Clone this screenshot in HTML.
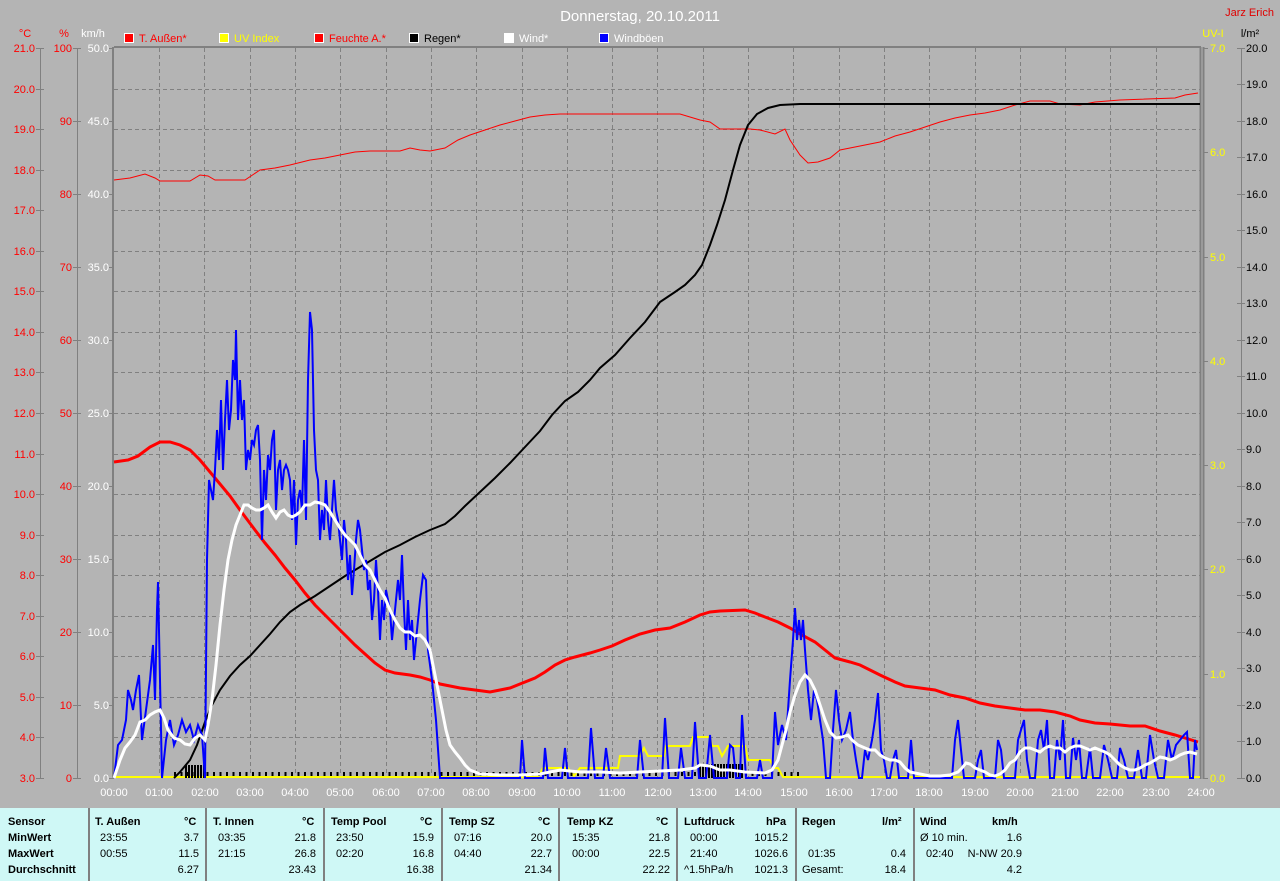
<!DOCTYPE html>
<html><head><meta charset="utf-8"><style>
body{margin:0;width:1280px;height:881px;background:#b4b4b4;font-family:"Liberation Sans",sans-serif;overflow:hidden;position:relative}
svg{position:absolute;left:0;top:0}
.tbl{position:absolute;left:0;top:808px;width:1280px;height:73px;background:#cff8f6;font-size:11px;color:#000}
.c{position:absolute;top:0;height:73px;border-left:2px solid #808080}
.r{position:absolute;white-space:nowrap}
.b{font-weight:bold}
</style></head><body>
<svg width="1280" height="808" font-family="Liberation Sans, sans-serif" font-size="11">
<text x="640" y="21" text-anchor="middle" fill="#fff" font-size="15">Donnerstag, 20.10.2011</text>
<text x="1274" y="16" text-anchor="end" fill="#e00000">Jarz Erich</text>
<!-- legend -->
<g font-size="11">
<rect x="124.5" y="33.5" width="9" height="9" fill="#f00" stroke="#fff"/><text x="139" y="42" fill="#f00">T. Außen*</text>
<rect x="219.5" y="33.5" width="9" height="9" fill="#ff0" stroke="#fff"/><text x="234" y="42" fill="#ff0">UV Index</text>
<rect x="314.5" y="33.5" width="9" height="9" fill="#f00" stroke="#fff"/><text x="329" y="42" fill="#f00">Feuchte A.*</text>
<rect x="409.5" y="33.5" width="9" height="9" fill="#000" stroke="#fff"/><text x="424" y="42" fill="#000">Regen*</text>
<rect x="504.5" y="33.5" width="9" height="9" fill="#fff" stroke="#fff"/><text x="519" y="42" fill="#fff">Wind*</text>
<rect x="599.5" y="33.5" width="9" height="9" fill="#00f" stroke="#fff"/><text x="614" y="42" fill="#fff">Windböen</text>
</g>
<!-- axis titles -->
<text x="25" y="37" fill="#f00" text-anchor="middle">°C</text>
<text x="64" y="37" fill="#f00" text-anchor="middle">%</text>
<text x="93" y="37" fill="#fff" text-anchor="middle">km/h</text>
<text x="1213" y="37" fill="#ff0" text-anchor="middle">UV-I</text>
<text x="1250" y="37" fill="#000" text-anchor="middle">l/m²</text>
<g id="grid" stroke="#808080" stroke-dasharray="4,3" stroke-width="1">
<path d="M114 89.5H1200M114 129.5H1200M114 170.5H1200M114 210.5H1200M114 251.5H1200M114 291.5H1200M114 332.5H1200M114 372.5H1200M114 413.5H1200M114 454.5H1200M114 494.5H1200M114 535.5H1200M114 575.5H1200M114 616.5H1200M114 656.5H1200M114 697.5H1200M114 737.5H1200"/>
<path d="M159.5 48V778M204.5 48V778M250.5 48V778M295.5 48V778M340.5 48V778M386.5 48V778M431.5 48V778M476.5 48V778M522.5 48V778M567.5 48V778M612.5 48V778M657.5 48V778M703.5 48V778M748.5 48V778M793.5 48V778M839.5 48V778M884.5 48V778M929.5 48V778M975.5 48V778M1020.5 48V778M1065.5 48V778M1110.5 48V778M1156.5 48V778"/>
</g>
<!-- axes -->
<g stroke="#808080" fill="none">
<path d="M40.5 48V778M77.5 48V778M1241.5 48V778" />
<path d="M113 47V779M114 47H1201M1200.5 47V779M1203.5 47V779" stroke-width="2"/>
<path d="M36 48.5h8M36 89.5h8M36 129.5h8M36 170.5h8M36 210.5h8M36 251.5h8M36 291.5h8M36 332.5h8M36 372.5h8M36 413.5h8M36 454.5h8M36 494.5h8M36 535.5h8M36 575.5h8M36 616.5h8M36 656.5h8M36 697.5h8M36 737.5h8M36 778.5h8"/>
<path d="M73 48.5h8M73 121.5h8M73 194.5h8M73 267.5h8M73 340.5h8M73 413.5h8M73 486.5h8M73 559.5h8M73 632.5h8M73 705.5h8M73 778.5h8"/>
<path d="M109 48.5h5M109 121.5h5M109 194.5h5M109 267.5h5M109 340.5h5M109 413.5h5M109 486.5h5M109 559.5h5M109 632.5h5M109 705.5h5M109 778.5h5"/>
<path d="M1203 48.5h5M1203 152.5h5M1203 257.5h5M1203 361.5h5M1203 465.5h5M1203 569.5h5M1203 674.5h5M1203 778.5h5"/>
<path d="M1237 48.5h8M1237 84.5h8M1237 121.5h8M1237 157.5h8M1237 194.5h8M1237 230.5h8M1237 267.5h8M1237 303.5h8M1237 340.5h8M1237 376.5h8M1237 413.5h8M1237 449.5h8M1237 486.5h8M1237 522.5h8M1237 559.5h8M1237 595.5h8M1237 632.5h8M1237 668.5h8M1237 705.5h8M1237 741.5h8M1237 778.5h8"/>
</g>
<g fill="#f00" text-anchor="end">
<text x="35" y="52">21.0</text><text x="35" y="93">20.0</text><text x="35" y="133">19.0</text><text x="35" y="174">18.0</text><text x="35" y="214">17.0</text><text x="35" y="255">16.0</text><text x="35" y="295">15.0</text><text x="35" y="336">14.0</text><text x="35" y="376">13.0</text><text x="35" y="417">12.0</text><text x="35" y="458">11.0</text><text x="35" y="498">10.0</text><text x="35" y="539">9.0</text><text x="35" y="579">8.0</text><text x="35" y="620">7.0</text><text x="35" y="660">6.0</text><text x="35" y="701">5.0</text><text x="35" y="741">4.0</text><text x="35" y="782">3.0</text>
<text x="72" y="52">100</text><text x="72" y="125">90</text><text x="72" y="198">80</text><text x="72" y="271">70</text><text x="72" y="344">60</text><text x="72" y="417">50</text><text x="72" y="490">40</text><text x="72" y="563">30</text><text x="72" y="636">20</text><text x="72" y="709">10</text><text x="72" y="782">0</text>
</g>
<g fill="#fff" text-anchor="end">
<text x="109" y="52">50.0</text><text x="109" y="125">45.0</text><text x="109" y="198">40.0</text><text x="109" y="271">35.0</text><text x="109" y="344">30.0</text><text x="109" y="417">25.0</text><text x="109" y="490">20.0</text><text x="109" y="563">15.0</text><text x="109" y="636">10.0</text><text x="109" y="709">5.0</text><text x="109" y="782">0.0</text>
</g>
<g fill="#ff0">
<text x="1210" y="52">7.0</text><text x="1210" y="156">6.0</text><text x="1210" y="261">5.0</text><text x="1210" y="365">4.0</text><text x="1210" y="469">3.0</text><text x="1210" y="573">2.0</text><text x="1210" y="678">1.0</text><text x="1210" y="782">0.0</text>
</g>
<g fill="#000">
<text x="1246" y="52">20.0</text><text x="1246" y="88">19.0</text><text x="1246" y="125">18.0</text><text x="1246" y="161">17.0</text><text x="1246" y="198">16.0</text><text x="1246" y="234">15.0</text><text x="1246" y="271">14.0</text><text x="1246" y="307">13.0</text><text x="1246" y="344">12.0</text><text x="1246" y="380">11.0</text><text x="1246" y="417">10.0</text><text x="1246" y="453">9.0</text><text x="1246" y="490">8.0</text><text x="1246" y="526">7.0</text><text x="1246" y="563">6.0</text><text x="1246" y="599">5.0</text><text x="1246" y="636">4.0</text><text x="1246" y="672">3.0</text><text x="1246" y="709">2.0</text><text x="1246" y="745">1.0</text><text x="1246" y="782">0.0</text>
</g>
<g fill="#fff" text-anchor="middle">
<text x="114" y="796">00:00</text><text x="159" y="796">01:00</text><text x="205" y="796">02:00</text><text x="250" y="796">03:00</text><text x="295" y="796">04:00</text><text x="340" y="796">05:00</text><text x="386" y="796">06:00</text><text x="431" y="796">07:00</text><text x="476" y="796">08:00</text><text x="522" y="796">09:00</text><text x="567" y="796">10:00</text><text x="612" y="796">11:00</text><text x="658" y="796">12:00</text><text x="703" y="796">13:00</text><text x="748" y="796">14:00</text><text x="794" y="796">15:00</text><text x="839" y="796">16:00</text><text x="884" y="796">17:00</text><text x="929" y="796">18:00</text><text x="975" y="796">19:00</text><text x="1020" y="796">20:00</text><text x="1065" y="796">21:00</text><text x="1110" y="796">22:00</text><text x="1156" y="796">23:00</text><text x="1201" y="796">24:00</text>
</g>
<!-- UV -->
<polyline fill="none" stroke="#ff0" stroke-width="2" points="114,777 538,777 543,768 568,768 574,776 580,768 618,768 620,756 640,756 644,748 648,756 664,756 666,746 690,746 693,737 710,737 712,746 718,746 722,756 728,746 745,746 748,760 770,760 774,768 778,768 783,777 1200,777"/>
<!-- rain dots/bars -->
<path d="M174 774H700M745 774H800" stroke="#000" stroke-width="4" stroke-dasharray="2,4.5"/>
<path d="M186 765V778M189 765V778M192 765V778M195 765V778M198 765V778M201 765V778M204 765V778M700 764V778M703 764V778M706 764V778M709 764V778M712 764V778M715 764V778M718 764V778M721 764V778M724 764V778M727 764V778M730 764V778M733 764V778M736 764V778M739 764V778M742 764V778" stroke="#000" stroke-width="2"/>
<!-- humidity -->
<polyline fill="none" stroke="#f00" stroke-width="1" points="114,180 130,178 145,174 155,178 160,181 190,181 200,175 208,176 215,180 245,180 260,170 275,168 290,165 310,160 325,158 340,155 355,152 370,151 400,151 410,148 420,150 430,151 445,148 458,140 470,135 485,130 500,125 515,121 530,117 545,115 560,114 680,114 690,117 700,120 710,122 720,129 750,129 760,130 775,134 785,129 790,140 800,155 808,163 818,162 830,158 840,150 850,148 865,145 880,142 895,136 910,132 925,127 940,122 955,118 970,115 985,113 1000,110 1015,105 1030,101 1050,101 1060,104 1080,105 1095,102 1120,100 1175,98 1185,95 1198,93"/>
<!-- temp -->
<polyline fill="none" stroke="#f00" stroke-width="3" points="114,462 128,460 138,456 150,447 160,442 170,442 180,445 190,450 200,460 210,472 220,484 230,496 240,510 255,530 265,543 275,555 285,568 295,580 305,593 315,605 325,615 335,625 345,635 355,645 365,654 375,663 385,670 395,673 410,675 420,677 430,680 440,684 450,686 460,688 475,690 490,692 500,690 510,688 520,684 535,678 545,672 555,665 565,660 575,657 590,653 600,650 612,646 625,640 640,634 655,630 670,628 685,622 700,615 710,612 720,611 745,610 755,613 765,617 778,622 790,628 800,634 815,642 825,650 835,658 850,662 860,665 870,670 880,675 895,682 905,686 920,688 935,690 950,695 965,698 980,703 995,706 1010,708 1025,710 1040,710 1055,712 1070,716 1080,720 1095,723 1110,724 1130,726 1145,726 1160,731 1175,735 1185,738 1198,742"/>
<!-- rain cumulative -->
<polyline fill="none" stroke="#000" stroke-width="2" points="174,778 180,772 190,760 197,745 205,722 212,705 220,690 230,676 240,665 250,656 260,645 270,634 280,622 290,612 300,605 315,596 330,586 345,576 355,570 370,561 385,552 400,545 415,537 430,530 445,524 455,516 465,506 480,492 495,478 510,463 525,447 540,431 552,415 565,401 578,392 590,380 600,368 615,355 630,338 645,322 660,302 675,292 685,285 695,275 702,265 710,245 717,225 725,200 733,170 740,145 748,125 757,114 768,108 780,105 800,104 1200,104"/>
<!-- gusts -->
<polyline fill="none" stroke="#00f" stroke-width="2" points="114,778 118,745 122,740 126,720 128,690 131,700 133,710 136,690 139,675 142,740 146,710 150,680 153,645 155,700 157,610 158,582 160,680 162,778 166,740 170,720 174,745 178,735 182,720 186,732 190,725 194,740 198,725 202,735 205,778 207,560 209,480 211,490 213,500 215,470 217,430 219,460 221,400 223,470 225,420 227,380 229,430 231,410 233,360 235,380 236,330 238,420 240,380 242,420 244,400 246,470 248,450 250,460 252,440 254,445 256,430 258,425 260,460 262,540 264,470 266,500 268,455 270,470 272,440 274,430 276,510 278,470 280,460 282,490 284,470 286,465 288,470 290,480 292,520 294,480 296,545 298,500 300,490 302,510 304,440 306,520 308,380 310,312 312,330 314,430 316,470 318,480 320,540 322,510 324,530 326,480 328,520 330,540 332,510 334,480 336,510 338,520 340,540 342,560 344,520 346,540 348,580 350,555 352,595 354,570 356,540 358,520 360,530 362,550 364,570 366,560 368,590 370,580 372,620 374,600 376,560 378,590 380,640 382,600 384,620 386,590 388,600 390,610 392,640 394,620 396,600 398,580 400,600 402,555 404,610 406,650 408,600 410,640 412,620 414,660 416,640 418,620 420,600 423,575 426,580 428,650 432,680 436,720 440,778 520,778 522,740 525,778 543,778 545,748 548,778 562,778 565,748 568,778 588,778 591,728 595,778 603,778 606,748 610,778 637,778 640,740 644,778 662,778 665,718 669,778 678,778 681,748 685,778 692,778 695,722 699,778 706,778 710,735 714,778 727,778 730,745 733,748 736,778 740,778 742,715 746,778 757,778 760,760 763,778 772,778 775,712 778,745 782,725 786,740 790,680 793,640 795,608 797,640 799,620 801,640 803,620 805,650 808,690 811,720 814,690 817,700 820,720 823,740 826,778 830,778 833,730 836,690 839,720 842,740 846,730 850,712 853,740 856,760 859,778 862,778 865,750 868,760 872,740 875,720 878,693 881,750 884,760 887,778 890,778 893,760 896,750 899,778 908,778 911,740 914,778 952,778 955,740 958,720 961,750 964,778 975,778 978,760 981,750 984,778 995,778 998,740 1001,750 1004,778 1015,778 1018,740 1021,730 1024,720 1027,760 1030,778 1035,778 1038,740 1041,730 1044,750 1047,720 1050,778 1054,778 1057,740 1060,760 1063,720 1066,778 1070,778 1073,738 1076,760 1079,740 1082,778 1086,778 1090,748 1093,778 1100,778 1104,745 1108,760 1112,778 1117,778 1120,748 1124,760 1128,778 1134,778 1138,750 1142,778 1146,778 1150,735 1154,760 1158,778 1164,778 1168,740 1172,760 1176,745 1180,740 1184,735 1187,732 1190,778 1193,778 1195,740 1197,750"/>
<!-- wind -->
<polyline fill="none" stroke="#fff" stroke-width="3" points="114,778 120,760 125,748 130,742 135,735 140,722 145,720 150,715 155,712 160,710 164,718 168,730 174,738 180,740 185,744 190,745 195,738 200,735 205,740 208,725 212,700 216,665 220,625 224,590 228,560 232,540 236,525 240,515 244,505 248,505 252,508 256,510 260,510 264,508 268,505 272,512 276,518 280,512 284,510 288,515 292,517 296,515 300,512 305,505 310,505 315,502 320,503 325,505 330,512 335,520 340,528 345,535 350,540 355,545 360,555 365,565 370,570 375,580 380,590 385,598 390,610 395,620 400,628 405,632 410,632 415,636 420,635 425,640 430,650 434,670 438,690 442,710 446,730 450,745 455,752 460,758 465,765 470,770 475,772 480,774 500,775 520,775 540,774 560,770 580,772 600,772 620,773 640,772 660,771 680,770 695,768 700,765 710,766 720,770 730,770 745,772 765,773 772,770 778,760 782,745 786,730 790,712 795,695 800,682 805,675 810,680 815,690 820,705 825,720 830,732 836,738 842,737 848,735 852,740 858,745 865,748 870,750 875,750 880,755 885,758 890,760 895,760 900,762 905,768 910,772 920,774 930,776 940,776 950,775 958,772 962,768 966,763 970,764 975,768 980,770 985,772 990,775 995,776 1000,774 1005,770 1010,763 1015,760 1020,752 1025,748 1030,748 1035,750 1040,752 1045,748 1050,746 1055,748 1060,748 1065,752 1070,748 1075,746 1080,746 1085,748 1090,750 1095,748 1100,750 1105,752 1110,755 1115,760 1120,765 1125,768 1130,770 1135,770 1140,768 1145,765 1150,763 1155,760 1160,757 1165,758 1170,760 1175,758 1180,755 1185,753 1190,752 1197,754"/>
</svg>
<div class="tbl">
 <div class="r b" style="left:8px;top:8px">Sensor</div>
 <div class="r b" style="left:8px;top:24px">MinWert</div>
 <div class="r b" style="left:8px;top:40px">MaxWert</div>
 <div class="r b" style="left:8px;top:56px">Durchschnitt</div>

 <div class="c" style="left:88px;width:117px"></div>
 <div class="r b" style="left:95px;top:8px">T. Außen</div><div class="r b" style="left:184px;top:8px">°C</div>
 <div class="r" style="left:100px;top:24px">23:55</div><div class="r" style="left:180px;top:24px;width:19px;text-align:right">3.7</div>
 <div class="r" style="left:100px;top:40px">00:55</div><div class="r" style="left:170px;top:40px;width:29px;text-align:right">11.5</div>
 <div class="r" style="left:170px;top:56px;width:29px;text-align:right">6.27</div>

 <div class="c" style="left:205px"></div>
 <div class="r b" style="left:213px;top:8px">T. Innen</div><div class="r b" style="left:302px;top:8px">°C</div>
 <div class="r" style="left:218px;top:24px">03:35</div><div class="r" style="left:287px;top:24px;width:29px;text-align:right">21.8</div>
 <div class="r" style="left:218px;top:40px">21:15</div><div class="r" style="left:287px;top:40px;width:29px;text-align:right">26.8</div>
 <div class="r" style="left:280px;top:56px;width:36px;text-align:right">23.43</div>

 <div class="c" style="left:323px"></div>
 <div class="r b" style="left:331px;top:8px">Temp Pool</div><div class="r b" style="left:420px;top:8px">°C</div>
 <div class="r" style="left:336px;top:24px">23:50</div><div class="r" style="left:405px;top:24px;width:29px;text-align:right">15.9</div>
 <div class="r" style="left:336px;top:40px">02:20</div><div class="r" style="left:405px;top:40px;width:29px;text-align:right">16.8</div>
 <div class="r" style="left:398px;top:56px;width:36px;text-align:right">16.38</div>

 <div class="c" style="left:441px"></div>
 <div class="r b" style="left:449px;top:8px">Temp SZ</div><div class="r b" style="left:538px;top:8px">°C</div>
 <div class="r" style="left:454px;top:24px">07:16</div><div class="r" style="left:523px;top:24px;width:29px;text-align:right">20.0</div>
 <div class="r" style="left:454px;top:40px">04:40</div><div class="r" style="left:523px;top:40px;width:29px;text-align:right">22.7</div>
 <div class="r" style="left:516px;top:56px;width:36px;text-align:right">21.34</div>

 <div class="c" style="left:558px"></div>
 <div class="r b" style="left:567px;top:8px">Temp KZ</div><div class="r b" style="left:656px;top:8px">°C</div>
 <div class="r" style="left:572px;top:24px">15:35</div><div class="r" style="left:641px;top:24px;width:29px;text-align:right">21.8</div>
 <div class="r" style="left:572px;top:40px">00:00</div><div class="r" style="left:641px;top:40px;width:29px;text-align:right">22.5</div>
 <div class="r" style="left:634px;top:56px;width:36px;text-align:right">22.22</div>

 <div class="c" style="left:676px"></div>
 <div class="r b" style="left:684px;top:8px">Luftdruck</div><div class="r b" style="left:766px;top:8px">hPa</div>
 <div class="r" style="left:690px;top:24px">00:00</div><div class="r" style="left:742px;top:24px;width:46px;text-align:right">1015.2</div>
 <div class="r" style="left:690px;top:40px">21:40</div><div class="r" style="left:742px;top:40px;width:46px;text-align:right">1026.6</div>
 <div class="r" style="left:684px;top:56px">^1.5hPa/h</div><div class="r" style="left:742px;top:56px;width:46px;text-align:right">1021.3</div>

 <div class="c" style="left:795px"></div>
 <div class="r b" style="left:802px;top:8px">Regen</div><div class="r b" style="left:882px;top:8px">l/m²</div>
 <div class="r" style="left:808px;top:40px">01:35</div><div class="r" style="left:876px;top:40px;width:30px;text-align:right">0.4</div>
 <div class="r" style="left:802px;top:56px">Gesamt:</div><div class="r" style="left:876px;top:56px;width:30px;text-align:right">18.4</div>

 <div class="c" style="left:913px"></div>
 <div class="r b" style="left:920px;top:8px">Wind</div><div class="r b" style="left:992px;top:8px">km/h</div>
 <div class="r" style="left:920px;top:24px">Ø 10 min.</div><div class="r" style="left:990px;top:24px;width:32px;text-align:right">1.6</div>
 <div class="r" style="left:926px;top:40px">02:40</div><div class="r" style="left:960px;top:40px;width:62px;text-align:right">N-NW 20.9</div>
 <div class="r" style="left:990px;top:56px;width:32px;text-align:right">4.2</div>
</div>
</body></html>
